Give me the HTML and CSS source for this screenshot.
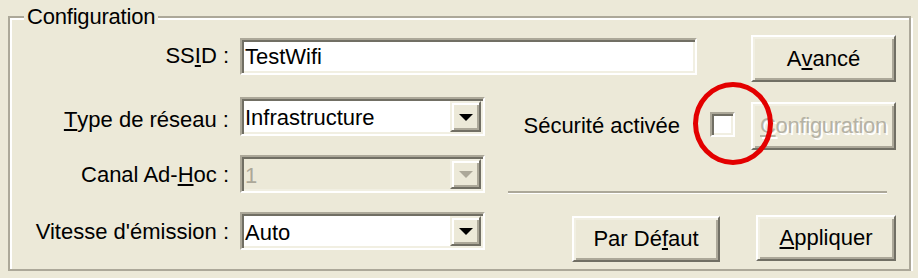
FILE: index.html
```html
<!DOCTYPE html>
<html lang="fr">
<head>
<meta charset="utf-8">
<title>Configuration</title>
<link rel="stylesheet" href="styles.css">
</head>
<body>
<fieldset class="group">
  <legend class="group-title">Configuration</legend>
  <div class="form">
    <label class="lbl row1">SS<u>I</u>D :</label>
    <div class="field ssid row1">TestWifi</div>
    <button class="btn avance row1">A<u>v</u>ancé</button>

    <label class="lbl row2"><u>T</u>ype de réseau :</label>
    <div class="combo row2"><span class="combo-text">Infrastructure</span><span class="drop"><span class="arrow"></span></span></div>
    <div class="security row2">
      <span class="security-text">Sécurité activée</span>
      <span class="check-wrap"><span class="check"></span><span class="mark"></span></span>
    </div>
    <button class="btn config row2" disabled><u>C</u>onfiguration</button>

    <label class="lbl row3">Canal Ad-<u>H</u>oc :</label>
    <div class="combo disabled row3"><span class="combo-text">1</span><span class="drop"><span class="arrow"></span></span></div>
    <div class="separator row3"></div>

    <label class="lbl row4">Vitesse d'émission :</label>
    <div class="combo row4"><span class="combo-text">Auto</span><span class="drop"><span class="arrow"></span></span></div>
    <button class="btn defaut row4">Par Dé<u>f</u>aut</button>
    <button class="btn appliquer row4"><u>A</u>ppliquer</button>
  </div>
</fieldset>
</body>
</html>
```

FILE: styles.css
```css
html, body {
  background: #ece9d8;
}
body {
  margin: 5px 0 0 8px;
  font-family: "Liberation Sans", Arial, sans-serif;
  font-size: 22px;
  color: #000;
}

.group {
  box-sizing: border-box;
  width: 903px;
  margin: 0;
  padding: 6px 13px 4px 0;
  border: 2px solid #aca899;
  box-shadow: inset 2px 2px 0 #fff, 2px 2px 0 #fff;
  min-width: 0;
}
.group-title {
  margin-left: 14px;
  padding: 0 3px;
  line-height: 24px;
  background: #ece9d8;
  letter-spacing: -0.2px;
}

.form {
  display: grid;
  grid-template-columns: 230px 245px 266px 145px;
  grid-template-rows: 60px 58px 55px 57px;
}
.row1 { grid-row: 1; }
.row2 { grid-row: 2; }
.row3 { grid-row: 3; }
.row4 { grid-row: 4; }

.lbl {
  grid-column: 1;
  align-self: start;
  display: flex;
  align-items: center;
  justify-content: flex-end;
  padding-right: 11px;
  white-space: nowrap;
}
.lbl.row1 { margin-top: 2px; height: 37px; }
.lbl.row2 { margin-top: 5px; height: 39px; }
.lbl.row3 { margin-top: 3px; height: 38px; }
.lbl.row4 { margin-top: 5px; height: 38px; }

/* sunken edit field */
.field, .combo, .check {
  box-sizing: border-box;
  border: 2px solid;
  border-color: #aca899 #fff #fff #aca899;
  box-shadow: inset 2px 2px 0 #716f64, inset -2px -2px 0 #f1efe2;
  background: #fff;
}
.field {
  grid-column: 2 / 4;
  align-self: start;
  width: 457px;
  height: 37px;
  margin-top: 3px;
  padding: 0 4px 0 3px;
  display: flex;
  align-items: center;
}

.combo {
  grid-column: 2;
  align-self: start;
  display: flex;
  align-items: stretch;
  padding: 2px;
}
.combo.row2 { margin-top: 2px; height: 39px; }
.combo.row3 { margin-top: 2px; height: 38px; }
.combo.row4 { margin-top: 4px; height: 38px; }
.combo-text {
  flex: 1;
  display: flex;
  align-items: center;
  padding: 3px 2px 0 1px;
}
.drop {
  width: 31px;
  box-sizing: border-box;
  border: 2px solid;
  border-color: #f1efe2 #716f64 #716f64 #f1efe2;
  box-shadow: inset 2px 2px 0 #fff, inset -2px -2px 0 #aca899;
  background: #ece9d8;
  display: flex;
  align-items: center;
  justify-content: center;
}
.arrow {
  width: 0;
  height: 0;
  border-left: 7px solid transparent;
  border-right: 7px solid transparent;
  border-top: 7px solid #000;
  margin-top: 1px;
}
.combo.disabled {
  background: #ece9d8;
}
.combo.disabled .combo-text { color: #aca899; }
.combo.disabled .arrow { border-top-color: #aca899; }

/* raised push buttons */
.btn {
  box-sizing: border-box;
  align-self: start;
  justify-self: end;
  margin: 0;
  padding: 0;
  font: inherit;
  color: #000;
  background: #ece9d8;
  border: 2px solid;
  border-color: #fff #716f64 #716f64 #fff;
  box-shadow: inset 2px 2px 0 #f1efe2, inset -2px -2px 0 #aca899;
  display: flex;
  align-items: center;
  justify-content: center;
}
.avance { grid-column: 4; width: 145px; height: 47px; margin-top: 0; }
.config {
  grid-column: 4;
  width: 145px;
  height: 48px;
  margin-top: 7px;
  color: #b5b2a5;
  text-shadow: 2px 2px 0 #fff;
  letter-spacing: -0.3px;
}
.defaut { grid-column: 3; width: 148px; height: 46px; margin-top: 8px; margin-right: 31px; }
.appliquer { grid-column: 4; width: 140px; height: 46px; margin-top: 7px; }

.security {
  grid-column: 3;
  align-self: start;
  justify-self: end;
  margin-top: 17px;
  margin-right: 16px;
  height: 25px;
  display: flex;
  align-items: center;
  gap: 30px;
  white-space: nowrap;
}
.security-text { padding-top: 3px; }
.check-wrap {
  position: relative;
  width: 25px;
  height: 25px;
}
.check {
  display: block;
  width: 25px;
  height: 25px;
}
.mark {
  position: absolute;
  left: -17px;
  top: -30px;
  width: 80px;
  height: 83px;
  box-sizing: border-box;
  border: 5px solid #e30000;
  border-radius: 50%;
}

.separator {
  grid-column: 3 / 5;
  align-self: start;
  margin: 38px 9px 0 23px;
  height: 0;
  border-top: 2px solid #aca899;
  border-bottom: 1px solid #fff;
}
```
